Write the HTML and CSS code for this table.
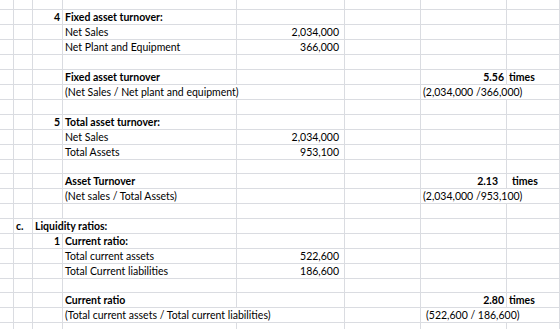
FILE: index.html
```html
<!DOCTYPE html>
<html>
<head>
<meta charset="utf-8">
<link rel="stylesheet" href="styles.css">
</head>
<body>
<div class="sheet">
  <div class="row top"><div class="c"></div><div class="c"></div><div class="c"></div><div class="c"></div><div class="c"></div><div class="c"></div><div class="c"></div><div class="c"></div></div>

  <div class="row"><div class="c"></div><div class="c"></div><div class="c num b">4</div><div class="c b">Fixed asset turnover:</div><div class="c"></div><div class="c"></div><div class="c"></div><div class="c"></div></div>
  <div class="row"><div class="c"></div><div class="c"></div><div class="c"></div><div class="c">Net Sales</div><div class="c num acc">2,034,000</div><div class="c"></div><div class="c"></div><div class="c"></div></div>
  <div class="row"><div class="c"></div><div class="c"></div><div class="c"></div><div class="c">Net Plant and Equipment</div><div class="c num acc">366,000</div><div class="c"></div><div class="c"></div><div class="c"></div></div>
  <div class="row"><div class="c"></div><div class="c"></div><div class="c"></div><div class="c"></div><div class="c"></div><div class="c"></div><div class="c"></div><div class="c"></div></div>
  <div class="row"><div class="c"></div><div class="c"></div><div class="c"></div><div class="c b">Fixed asset turnover</div><div class="c"></div><div class="c"></div><div class="c num b">5.56</div><div class="c b unit">times</div></div>
  <div class="row"><div class="c"></div><div class="c"></div><div class="c"></div><div class="c s2">(Net Sales / Net plant and equipment)</div><div class="c"></div><div class="c s2">(2,034,000 /366,000)</div></div>
  <div class="row"><div class="c"></div><div class="c"></div><div class="c"></div><div class="c"></div><div class="c"></div><div class="c"></div><div class="c"></div><div class="c"></div></div>

  <div class="row"><div class="c"></div><div class="c"></div><div class="c num b">5</div><div class="c b">Total asset turnover:</div><div class="c"></div><div class="c"></div><div class="c"></div><div class="c"></div></div>
  <div class="row"><div class="c"></div><div class="c"></div><div class="c"></div><div class="c">Net Sales</div><div class="c num acc">2,034,000</div><div class="c"></div><div class="c"></div><div class="c"></div></div>
  <div class="row"><div class="c"></div><div class="c"></div><div class="c"></div><div class="c">Total Assets</div><div class="c num acc">953,100</div><div class="c"></div><div class="c"></div><div class="c"></div></div>
  <div class="row short"><div class="c"></div><div class="c"></div><div class="c"></div><div class="c"></div><div class="c"></div><div class="c"></div><div class="c"></div><div class="c"></div></div>
  <div class="row"><div class="c"></div><div class="c"></div><div class="c"></div><div class="c b">Asset Turnover</div><div class="c"></div><div class="c"></div><div class="c num b pad8">2.13</div><div class="c b unit2">times</div></div>
  <div class="row"><div class="c"></div><div class="c"></div><div class="c"></div><div class="c">(Net sales / Total Assets)</div><div class="c"></div><div class="c"></div><div class="c s2">(2,034,000 /953,100)</div></div>
  <div class="row"><div class="c"></div><div class="c"></div><div class="c"></div><div class="c"></div><div class="c"></div><div class="c"></div><div class="c"></div><div class="c"></div></div>

  <div class="row"><div class="c"></div><div class="c b">c.</div><div class="c b s2">Liquidity ratios:</div><div class="c"></div><div class="c"></div><div class="c"></div><div class="c"></div></div>
  <div class="row"><div class="c"></div><div class="c"></div><div class="c num b">1</div><div class="c b">Current ratio:</div><div class="c"></div><div class="c"></div><div class="c"></div><div class="c"></div></div>
  <div class="row"><div class="c"></div><div class="c"></div><div class="c"></div><div class="c">Total current assets</div><div class="c num acc">522,600</div><div class="c"></div><div class="c"></div><div class="c"></div></div>
  <div class="row"><div class="c"></div><div class="c"></div><div class="c"></div><div class="c">Total Current liabilities</div><div class="c num acc">186,600</div><div class="c"></div><div class="c"></div><div class="c"></div></div>
  <div class="row short"><div class="c"></div><div class="c"></div><div class="c"></div><div class="c"></div><div class="c"></div><div class="c"></div><div class="c"></div><div class="c"></div></div>
  <div class="row"><div class="c"></div><div class="c"></div><div class="c"></div><div class="c b">Current ratio</div><div class="c"></div><div class="c"></div><div class="c num b">2.80</div><div class="c b unit">times</div></div>
  <div class="row"><div class="c"></div><div class="c"></div><div class="c"></div><div class="c s2">(Total current assets / Total current liabilities)</div><div class="c"></div><div class="c s2 ind">(522,600 / 186,600)</div></div>
  <div class="row"><div class="c"></div><div class="c"></div><div class="c"></div><div class="c"></div><div class="c"></div><div class="c"></div><div class="c"></div><div class="c"></div></div>
</div>
</body>
</html>
```

FILE: styles.css
```css
html, body {
  margin: 0;
  padding: 0;
  background: #ffffff;
}
.sheet {
  width: 560px;
  height: 329px;
  overflow: hidden;
  font-family: Lato, "Open Sans", sans-serif;
  font-size: 10.5px;
  color: #000;
}
.row {
  display: grid;
  grid-template-columns: 14px 19px 30px 174px 108px 76px 86px 1fr;
  height: 15px;
}
.row.top { height: 10px; }
.row.short { height: 14px; }
.c {
  box-sizing: border-box;
  border-right: 1px solid #dadce1;
  border-bottom: 1px solid #dadce1;
  padding: 1px 2px 0 2px;
  line-height: 13px;
  white-space: nowrap;
  overflow: visible;
  min-width: 0;
}
.s2 { grid-column: span 2; }
.b { font-weight: 700; }
.num { text-align: right; padding-right: 2px; }
.acc { padding-right: 5px; }
.pad8 { padding-right: 8px; }
.unit { padding-left: 2px; }
.unit2 { padding-left: 5px; }
.ind { padding-left: 5px; }
```
